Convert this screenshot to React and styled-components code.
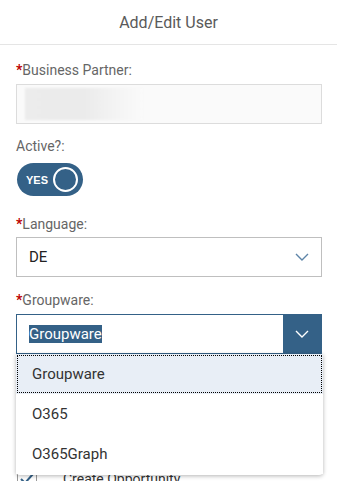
import React from "react";
import styled, { createGlobalStyle } from "styled-components";

const Global = createGlobalStyle`
  html, body { margin: 0; padding: 0; background: #fff; }
  body { font-family: Roboto, "Liberation Sans", Arial, sans-serif; overflow: hidden; }
  * { box-sizing: border-box; }
`;

const Page = styled.div`
  width: 337px;
  height: 481px;
  position: relative;
  overflow: hidden;
  background: #fff;
`;

const Header = styled.header`
  height: 45px;
  display: flex;
  align-items: center;
  justify-content: center;
  border-bottom: 1px solid #e5e5e5;
  font-size: 16px;
  color: #5a5a5a;
`;

const Form = styled.div`
  padding: 16px 15px 0 16px;
  display: flex;
  flex-direction: column;
`;

const Field = styled.div`
  display: flex;
  flex-direction: column;
  margin-bottom: ${(p) => p.$mb || 0}px;
  position: relative;
`;

const Label = styled.label`
  font-size: 14px;
  line-height: 18px;
  color: #666;
  margin-bottom: ${(p) => p.$mb || 5}px;
`;

const Req = styled.span`
  color: #bb0000;
  font-weight: bold;
`;

const Input = styled.div`
  height: 40px;
  border: 1px solid #dcdcdc;
  background: #fafafa;
  padding: 3px 8px;
  display: flex;
  align-items: stretch;
`;

const Blur = styled.div`
  width: 118px;
  background: linear-gradient(90deg, #ececec 0%, #ebebeb 50%, #f6f6f6 85%, #fafafa 100%);
  filter: blur(1px);
`;

const Toggle = styled.div`
  width: 66px;
  height: 33px;
  border-radius: 17px;
  background: #346187;
  display: flex;
  align-items: center;
  justify-content: space-between;
  padding: 0 5px 0 9px;
  margin-left: 1px;
  margin-top: 3px;
`;

const ToggleText = styled.span`
  color: #fff;
  font-weight: bold;
  font-size: 11px;
  font-family: "Liberation Sans", Arial, sans-serif;
`;

const Knob = styled.span`
  width: 25px;
  height: 25px;
  border-radius: 50%;
  border: 2px solid #fff;
`;

const Select = styled.div`
  height: 40px;
  border: 1px solid ${(p) => (p.$active ? "#346187" : "#bfbfbf")};
  background: #fff;
  display: flex;
  align-items: stretch;
`;

const SelectValue = styled.div`
  flex: 1;
  display: flex;
  align-items: center;
  padding-left: 12px;
  font-size: 15px;
  color: #222;
`;

const Highlight = styled.span`
  background: #346187;
  color: #fff;
  line-height: 18px;
`;

const Arrow = styled.div`
  width: 38px;
  display: flex;
  align-items: center;
  justify-content: center;
  background: ${(p) => (p.$active ? "#346187" : "transparent")};
`;

const Popover = styled.div`
  position: absolute;
  left: 0;
  right: -1px;
  top: 63px;
  background: #fff;
  border-radius: 0 0 4px 4px;
  box-shadow: 0 1px 4px rgba(0, 0, 0, 0.3);
  z-index: 5;
  padding-bottom: 1px;
`;

const Item = styled.div`
  height: 40px;
  display: flex;
  align-items: center;
  padding-left: 16px;
  font-size: 15px;
  color: #333;
  background: ${(p) => (p.$selected ? "#e8eef6" : "#fff")};
  outline: ${(p) => (p.$selected ? "1px dotted #000" : "none")};
  outline-offset: -2px;
`;

const CheckRow = styled.div`
  display: flex;
  align-items: center;
  gap: 26px;
  height: 22px;
  padding-left: 1px;
  margin-top: 114px;
`;

const Box = styled.span`
  width: 20px;
  height: 20px;
  border: 1px solid #999;
  border-radius: 2px;
  display: flex;
  align-items: center;
  justify-content: center;
`;

const CheckText = styled.span`
  font-size: 14px;
  color: #333;
`;

const Chevron = ({ color }) => (
  <svg width="14" height="8" viewBox="0 0 14 8">
    <path d="M1 1 L7 7 L13 1" fill="none" stroke={color} strokeWidth="1.4" />
  </svg>
);

export default function App() {
  return (
    <Page>
      <Global />
      <Header>Add/Edit User</Header>
      <Form>
        <Field $mb={13}>
          <Label $mb={5}>
            <Req>*</Req>Business Partner:
          </Label>
          <Input>
            <Blur />
          </Input>
        </Field>
        <Field $mb={19}>
          <Label $mb={5}>Active?:</Label>
          <Toggle>
            <ToggleText>YES</ToggleText>
            <Knob />
          </Toggle>
        </Field>
        <Field $mb={14}>
          <Label $mb={4}>
            <Req>*</Req>Language:
          </Label>
          <Select>
            <SelectValue>DE</SelectValue>
            <Arrow>
              <Chevron color="#5d84a8" />
            </Arrow>
          </Select>
        </Field>
        <Field>
          <Label $mb={5}>
            <Req>*</Req>Groupware:
          </Label>
          <Select $active>
            <SelectValue>
              <Highlight>Groupware</Highlight>
            </SelectValue>
            <Arrow $active>
              <Chevron color="#fff" />
            </Arrow>
          </Select>
          <Popover>
            <Item $selected>Groupware</Item>
            <Item>O365</Item>
            <Item>O365Graph</Item>
          </Popover>
        </Field>
        <CheckRow>
          <Box>
            <svg width="16" height="14" viewBox="0 0 16 14">
              <path d="M2 7 L6 11 L14 2" fill="none" stroke="#346187" strokeWidth="2" />
            </svg>
          </Box>
          <CheckText>Create Opportunity</CheckText>
        </CheckRow>
      </Form>
    </Page>
  );
}
